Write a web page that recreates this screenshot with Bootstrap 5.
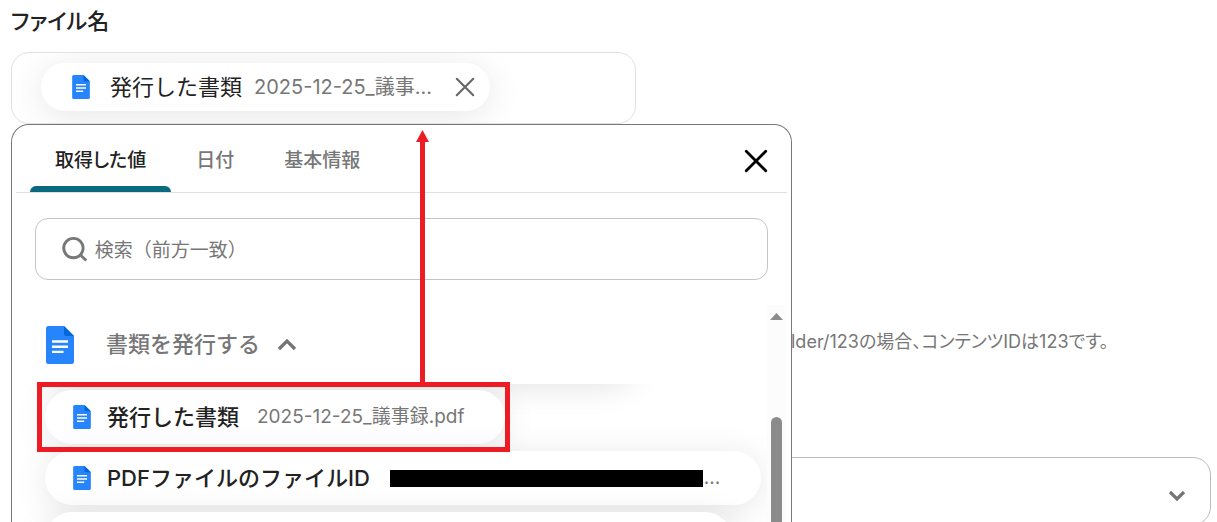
<!DOCTYPE html>
<html lang="ja">
<head>
<meta charset="utf-8">
<meta name="viewport" content="width=device-width, initial-scale=1">
<title>ファイル名</title>
<link href="https://cdn.jsdelivr.net/npm/bootstrap@5.3.0/dist/css/bootstrap.min.css" rel="stylesheet">
<style>
body{font-family:Inter,"Noto Sans CJK JP",sans-serif;color:#222;background:#fff;overflow:hidden}
.page{min-height:100vh;padding:0 6px 0 11px}
.field-label,.tab-btn,.hint{font-feature-settings:"palt"}
.field-label{font-size:22px;line-height:32px;font-weight:500;padding:5px 0 15px}
.value-box{width:calc(52% + 1px);height:72px;border:1px solid #dfe1e6;border-radius:18px;padding:10px 29px;overflow:hidden}
.pill{background:#fff;border-radius:28px;box-shadow:0 5px 34px rgba(0,0,0,.1);white-space:nowrap}
.pill-selected{height:48px;width:449px;max-width:100%;padding:0 14px 0 31px}
.pill-name{font-size:22px;line-height:32px}
.pill-sample{font-size:19px;line-height:28px;color:#777}
.pill-selected .pill-sample{font-size:20px;margin-left:12px}
.doc-sm{width:18px;height:24px;flex:none}
.doc-lg{width:28px;height:38px;flex:none}
.icon-btn{line-height:0;color:#666}
.picker{top:100%;left:0;width:calc(65% + 1px);height:calc(100vh - 124px);border:1px solid #777;border-bottom:0;border-radius:18px 18px 0 0;background:#fff;z-index:2;overflow:hidden}
.picker-head{flex:none;margin:0 4px;height:68px;border-bottom:1px solid #e0e0e0;padding:0 18px 0 14px}
.tab-btn{font-size:19px;line-height:28px;font-weight:500;color:#777;background:none;border:0;padding:22px 25px 17px;position:relative}
.tab-btn.active{color:#222}
.tab-btn.active::after{content:"";position:absolute;left:0;right:0;bottom:0;height:6px;border-radius:6px 6px 0 0;background:#08697f}
.close-btn{padding:5px 0 0}
.search-box{flex:none;margin:25px 23px;height:62px;border:1px solid #c4c4c4;border-radius:13px;padding:0 26px;gap:7px}
.search-box input{font-size:19px;line-height:28px;padding:3px 0 0;border:0;background:none}
.search-box input::placeholder{color:#777;opacity:1}
.group-btn{flex:none;height:79px;padding:0 34px;background:none;border:0;color:#777;font-size:22px;font-weight:500}
.values{position:relative;flex:1 1 auto;overflow:hidden;padding:6px 6px 0 33px;gap:7px}
.values::before{content:"";position:absolute;left:33px;top:-60px;width:590px;height:54px;border-radius:28px;box-shadow:0 5px 34px rgba(0,0,0,.14)}
.value-pill{height:54px;flex:none;border:0;padding:0 41px 0 28px;color:#222;position:relative}
.value-pill .pill-sample{margin-left:18px}
.value-pill .redacted{margin-left:20px;width:313px;height:17px;background:#000}
.value-pill .redacted + .pill-sample{margin-left:1px}
.next-pill{width:96%}
.track{flex:none;width:19px;background:#fcfcfc;margin-right:5px;padding-top:8px}
.thumb{width:11px;background:#8b8b8b;border-radius:6px 6px 0 0;margin-top:97px}
.hint{font-size:18px;line-height:28px;color:#777;padding:204px 0 101px 65%;white-space:nowrap}
.plain-select{height:68px;border:1px solid #bbb;border-radius:18px;background-image:url("data:image/svg+xml,%3Csvg xmlns='http://www.w3.org/2000/svg' viewBox='0 0 18 12'%3E%3Cpath d='M2 2l7 7 7-7' fill='none' stroke='%23757575' stroke-width='3.2'/%3E%3C/svg%3E");background-size:18px 12px;background-position:right 24px top 32px}
.mark-box{left:26px;top:258px;width:473px;height:70px;border:5px solid #ed1c24;z-index:3}
.mark-arrow{left:405px;top:6px;z-index:3}
</style>
</head>
<body>
<svg class="d-none" aria-hidden="true">
<symbol id="doc" viewBox="0 0 28 38"><path d="M2.500 0H18l10 10v25.500a2.500 2.500 0 0 1-2.500 2.500h-23A2.500 2.500 0 0 1 0 35.500v-33A2.500 2.500 0 0 1 2.500 0z" fill="#2684fc"/><path d="M18 0l10 10H20.500A2.500 2.500 0 0 1 18 7.500z" fill="#0066da"/><path d="M6 15.500h16M6 20.700h16M6 25.900h11.500" stroke="#fff" stroke-width="2.400"/></symbol>
<symbol id="cross" viewBox="0 0 24 24"><path d="M3 3l18 18M21 3L3 21" fill="none" stroke="currentColor" stroke-linecap="round"/></symbol>
</svg>
<main class="page">
  <div class="field-label" id="file-label">ファイル名</div>
  <div class="position-relative">
    <div class="value-box" role="group" aria-labelledby="file-label">
      <div class="pill pill-selected d-flex align-items-center">
        <svg class="doc-sm"><use href="#doc"/></svg>
        <span class="pill-name ms-3 ps-1">発行した書類</span>
        <span class="pill-sample">2025-12-25_議事...</span>
        <button type="button" class="icon-btn btn p-0 border-0 ms-auto" aria-label="削除"><svg width="22" height="22" stroke-width="2.300"><use href="#cross"/></svg></button>
      </div>
    </div>
    <section class="picker position-absolute d-flex flex-column">
      <div class="picker-head d-flex align-items-center">
        <div class="d-flex" role="tablist">
          <button type="button" role="tab" class="tab-btn active" aria-selected="true">取得した値</button>
          <button type="button" role="tab" class="tab-btn">日付</button>
          <button type="button" role="tab" class="tab-btn">基本情報</button>
        </div>
        <button type="button" class="close-btn btn border-0 ms-auto lh-1 text-black" aria-label="閉じる"><svg width="26" height="26" stroke-width="2.600"><use href="#cross"/></svg></button>
      </div>
      <label class="search-box d-flex align-items-center">
        <svg width="27" height="27" viewBox="0 0 27 27" fill="none" stroke="#777" stroke-width="3"><circle cx="12" cy="12" r="10.200"/><path d="M19 19l6.500 6"/></svg>
        <input type="text" class="form-control shadow-none" placeholder="検索（前方一致）" aria-label="検索">
      </label>
      <div class="d-flex flex-grow-1 overflow-hidden">
        <div class="d-flex flex-column flex-grow-1 overflow-hidden">
          <button type="button" class="group-btn d-flex align-items-center" aria-expanded="true">
            <svg class="doc-lg"><use href="#doc"/></svg>
            <span class="ms-4 ps-2">書類を発行する</span>
            <svg class="ms-3" width="22" height="15" viewBox="0 0 22 15"><path d="M3 12l8-8 8 8" fill="none" stroke="#757575" stroke-width="3.200"/></svg>
          </button>
          <div class="values d-flex flex-column align-items-start">
            <button type="button" class="pill value-pill d-flex align-items-center">
              <svg class="doc-sm"><use href="#doc"/></svg>
              <span class="pill-name fw-medium ms-3">発行した書類</span>
              <span class="pill-sample">2025-12-25_議事録.pdf</span>
            </button>
            <button type="button" class="pill value-pill d-flex align-items-center">
              <svg class="doc-sm"><use href="#doc"/></svg>
              <span class="pill-name fw-medium ms-3">PDFファイルのファイルID</span>
              <span class="redacted"></span>
              <span class="pill-sample">...</span>
            </button>
            <button type="button" class="pill value-pill next-pill" aria-label="値"></button>
          </div>
        </div>
        <div class="track d-flex flex-column align-items-center">
          <svg class="flex-shrink-0" width="13" height="7" viewBox="0 0 13 7"><path d="M6.500 0L13 7H0z" fill="#8b8b8b"/></svg>
          <div class="thumb flex-grow-1"></div>
        </div>
      </div>
    </section>
    <div class="position-absolute top-100 start-0">
      <div class="mark-box position-absolute"></div>
      <svg class="mark-arrow position-absolute" width="13" height="254" viewBox="0 0 13 254" fill="#ed1c24"><path d="M6.500 0L13 12H9v242H4V12H0z"/></svg>
    </div>
  </div>
  <p class="hint m-0" id="hint">lder/123の場合、コンテンツIDは123です。</p>
  <select class="form-select plain-select" aria-labelledby="hint"><option></option></select>
</main>
<script src="https://cdn.jsdelivr.net/npm/bootstrap@5.3.0/dist/js/bootstrap.bundle.min.js"></script>
</body>
</html>
